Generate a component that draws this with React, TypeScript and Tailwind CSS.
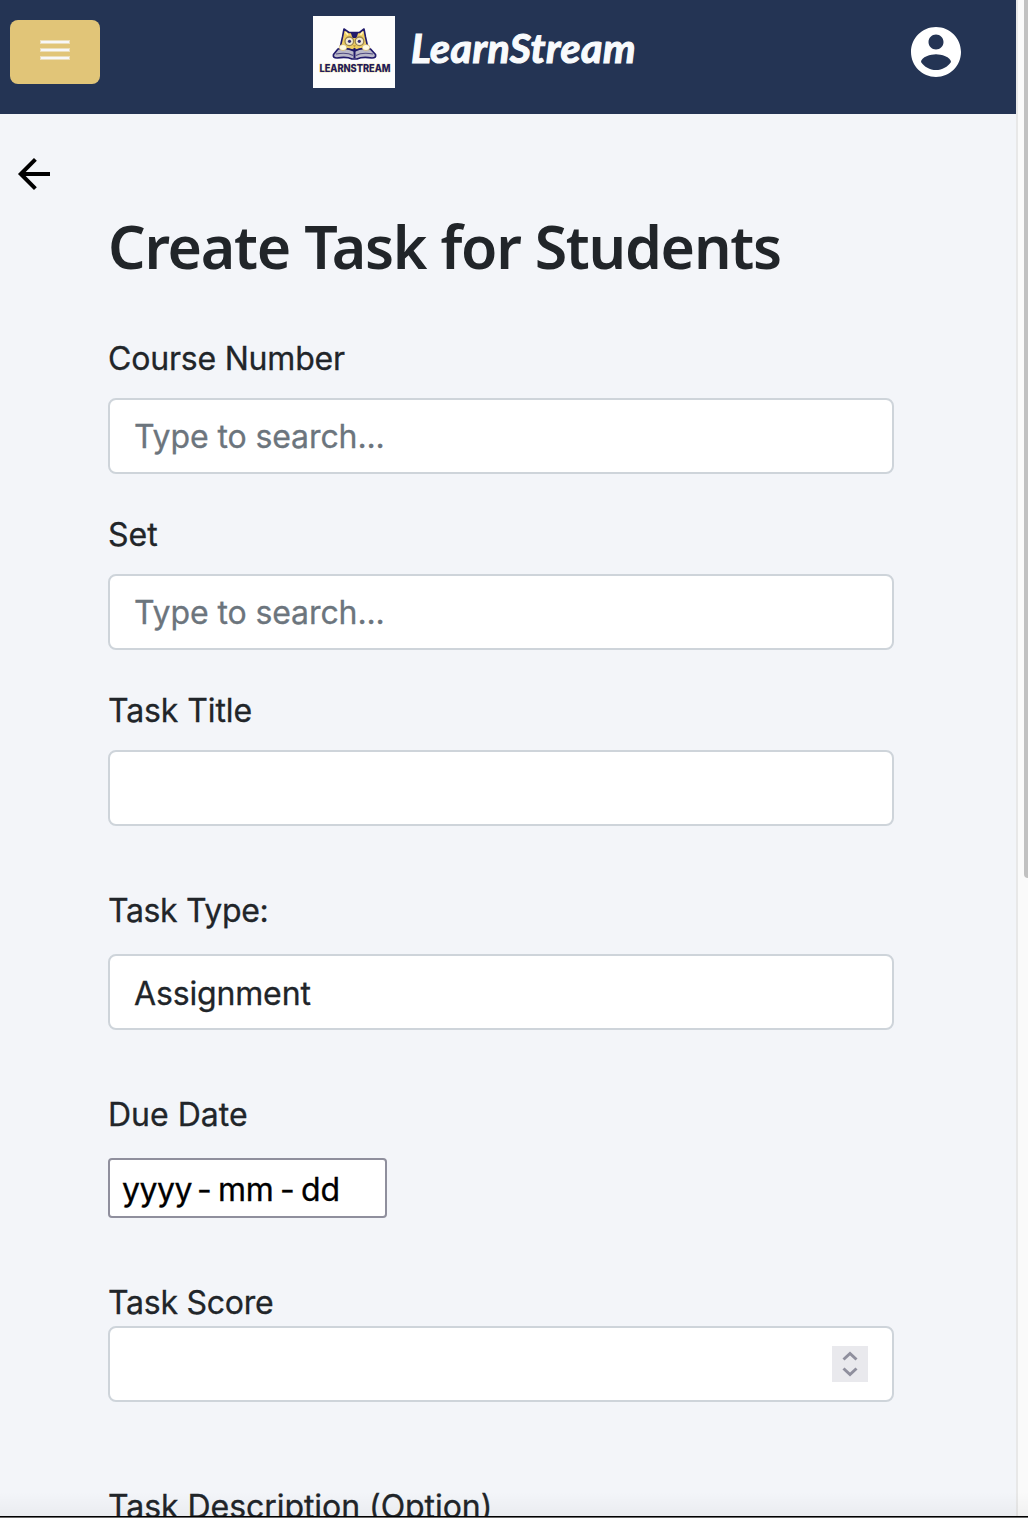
import React from "react";

function OwlLogo() {
  return (
    <svg className="h-[72px] w-[82px] shrink-0" viewBox="0 0 82 72" aria-label="LearnStream logo">
      <rect width="82" height="72" fill="#fdfdfd" />
      <path d="M27.500 30 L29.500 21 L31 13 L36 16.500 H46.500 L51 13 L52.500 21 L54.500 30 L49 34 H33 Z" fill="#f0ce62" stroke="#211a6b" strokeWidth="1.600" strokeLinejoin="round" />
      <path d="M37.500 16 H45.500 L43.500 22 H39.500 Z" fill="#211a6b" />
      <path d="M32.500 16 L35 19 M49.800 16 L47.500 19" stroke="#fff4be" strokeWidth="1.500" />
      <circle cx="36.300" cy="25.300" r="4.300" fill="#f3ead0" stroke="#9b8650" strokeWidth="1.300" />
      <circle cx="46.500" cy="25.300" r="4.300" fill="#f3ead0" stroke="#9b8650" strokeWidth="1.300" />
      <circle cx="36.500" cy="25.300" r="1.600" fill="#302976" />
      <circle cx="46.300" cy="25.300" r="1.600" fill="#302976" />
      <path d="M40 29 H43 L41.500 32 Z" fill="#c6a144" />
      <path d="M25 33 L20.500 38.500 Q19.500 42 24 42 Q34 40.500 39 43 H44 Q49 40.500 59 42 Q63.500 42 62.500 38.500 L57.500 33 Q48 31 41.500 35 Q34 31 25 33 Z" fill="#b9b8c8" stroke="#211a6b" strokeWidth="1.700" strokeLinejoin="round" />
      <path d="M23 38 Q34 36 40 39.500 M60 38 Q49 36 43 39.500" fill="none" stroke="#504a81" strokeWidth="1.200" />
      <path d="M41.500 32 V42" stroke="#211a6b" strokeWidth="2" />
      <ellipse cx="30" cy="31.500" rx="3.800" ry="3" fill="#fffbe6" stroke="#c9a84d" strokeWidth=".6" />
      <ellipse cx="53" cy="31.500" rx="3.800" ry="3" fill="#fffbe6" stroke="#c9a84d" strokeWidth=".6" />
      <text x="6.500" y="56" textLength="71" lengthAdjust="spacingAndGlyphs" fontFamily="Inter, sans-serif" fontSize="9.800" fontWeight="800" fill="#211a5c" stroke="#e9cd65" strokeWidth=".5" paintOrder="stroke">LEARNSTREAM</text>
    </svg>
  );
}

const label =
  "block h-12 whitespace-nowrap text-[32px] leading-[50px] text-[#212529] [-webkit-text-stroke:0.3px_currentColor]";
const field =
  "block h-[76px] w-full rounded-lg border-2 border-[#ced4da] bg-white px-6 pt-px text-[32px] tracking-[-0.1px] text-[#212529] outline-none [-webkit-text-stroke:0.3px_currentColor] placeholder:text-[#6c757d] placeholder:opacity-100";

export default function App() {
  return (
    <div className="relative flex h-[1518px] w-[1028px] overflow-hidden bg-[#f3f5f9] font-['Inter',sans-serif]">
      <div className="w-[1016px] shrink-0">
        <header className="flex h-[114px] items-start bg-[#243454]">
          <button className="mt-5 ml-2.5 flex h-16 w-[90px] shrink-0 flex-col items-center gap-1 rounded-lg bg-[#e1c578] pt-5" aria-label="Menu">
            <span className="h-1 w-[30px] border border-[#ecdfba] bg-[#f8f8f8]" />
            <span className="h-1 w-[30px] border border-[#ecdfba] bg-[#f8f8f8]" />
            <span className="h-1 w-[30px] border border-[#ecdfba] bg-[#f8f8f8]" />
          </button>
          <div className="mt-4 ml-[213px] flex shrink-0">
            <OwlLogo />
            <span className="ml-4 w-[240px] whitespace-nowrap font-['Lato',sans-serif] text-[41px] leading-[64px] font-bold tracking-[0.5px] text-[#f8fafc] italic [-webkit-text-stroke:1.2px_#f8fafc]">LearnStream</span>
          </div>
          <svg className="mt-[22px] ml-[255px] h-[60px] w-[60px] shrink-0" viewBox="0 0 24 24" fill="white" aria-label="Account">
            <path d="M12 2C6.480 2 2 6.480 2 12s4.480 10 10 10 10-4.480 10-10S17.520 2 12 2Zm0 3c1.660 0 3 1.340 3 3s-1.340 3-3 3-3-1.340-3-3 1.340-3 3-3Zm0 14.200c-2.500 0-4.710-1.280-6-3.220.03-1.990 4-3.080 6-3.080 1.990 0 5.970 1.090 6 3.080-1.290 1.940-3.500 3.220-6 3.220Z" />
          </svg>
        </header>

        <div className="h-[96px] pt-9 pl-[10px]">
          <svg className="h-12 w-12" viewBox="0 0 24 24" aria-label="Back">
            <path d="M20 12H5M12.700 4.700 5.400 12l7.300 7.300" fill="none" stroke="black" strokeWidth="2" />
          </svg>
        </div>

        <main className="ml-[108px] w-[786px]">
          <h1 className="h-[124px] whitespace-nowrap font-['Noto_Sans',sans-serif] text-[59px] leading-[72px] font-semibold tracking-[-1.25px] text-[#212529]">Create Task for Students</h1>

          <label className={`${label} mb-4 tracking-[-0.2px]`}>Course Number</label>
          <input className={`${field} mb-9`} placeholder="Type to search..." />

          <label className={`${label} mb-4`}>Set</label>
          <input className={`${field} mb-9`} placeholder="Type to search..." />

          <label className={`${label} mb-4 tracking-[-0.1px]`}>Task Title</label>
          <input className={`${field} mb-[60px]`} />

          <label className={`${label} mb-5 tracking-[-0.35px]`}>Task Type:</label>
          <div className={`${field} mb-[60px] leading-[73px] tracking-[-0.15px]`}>Assignment</div>

          <label className={`${label} mb-5`}>Due Date</label>
          <div className="mb-[60px] flex h-[60px] w-[279px] rounded border-2 border-[#8f8f9d] bg-white pl-3 text-[32px] leading-[59px] whitespace-nowrap text-black [-webkit-text-stroke:0.3px_currentColor]">
            <span className="w-[75px] tracking-[-0.5px]">yyyy</span>
            <span className="w-[21px]">-</span>
            <span className="w-[62px] tracking-[-0.3px]">mm</span>
            <span className="w-[21px]">-</span>
            <span>dd</span>
          </div>

          <label className={`${label} tracking-[-0.25px]`}>Task Score</label>
          <div className="mb-20 flex h-[76px] items-center justify-end rounded-lg border-2 border-[#ced4da] bg-white pr-6">
            <div className="flex h-9 w-9 items-center justify-center bg-[#e9e9ed]">
              <svg className="h-9 w-9" viewBox="0 0 36 36" fill="none" stroke="#8f8f9d" strokeWidth="3">
                <path d="m11.500 13.500 6.500-6 6.500 6M11.500 22.500l6.500 6 6.500-6" />
              </svg>
            </div>
          </div>

          <label className={`${label} tracking-[-0.05px]`}>Task Description (Option)</label>
        </main>
      </div>

      <div className="flex w-3 shrink-0 justify-end border-l-2 border-[#e8e8e8] bg-[#fafafa]">
        <div className="h-[878px] w-1 rounded-bl-[5px] bg-[#c1c1c1]" />
      </div>
      <div className="absolute bottom-0 left-0 h-[26px] w-full bg-linear-to-b from-transparent to-black/4" />
      <div className="absolute bottom-0 left-0 h-0.5 w-full border-t border-black bg-[#696969]" />
    </div>
  );
}
